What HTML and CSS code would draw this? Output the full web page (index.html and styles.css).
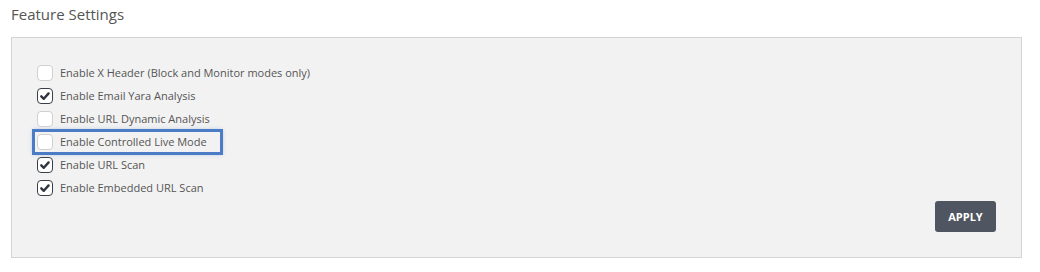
FILE: index.html
```html
<!DOCTYPE html>
<html>
<head>
<meta charset="utf-8">
<link rel="stylesheet" href="styles.css">
</head>
<body>
<div class="page">
  <h2 class="title">Feature Settings</h2>
  <div class="panel">
    <ul class="list">
      <li class="row"><span class="box"></span><span class="label">Enable X Header (Block and Monitor modes only)</span></li>
      <li class="row"><span class="box checked"><svg viewBox="0 0 16 16" width="16" height="16"><path d="M4.3 8.3 L6.8 10.8 L11.6 5.4" fill="none" stroke="#2f3640" stroke-width="2.4" stroke-linecap="round" stroke-linejoin="round"/></svg></span><span class="label">Enable Email Yara Analysis</span></li>
      <li class="row"><span class="box"></span><span class="label">Enable URL Dynamic Analysis</span></li>
      <li class="row highlight"><span class="box"></span><span class="label">Enable Controlled Live Mode</span></li>
      <li class="row"><span class="box checked"><svg viewBox="0 0 16 16" width="16" height="16"><path d="M4.3 8.3 L6.8 10.8 L11.6 5.4" fill="none" stroke="#2f3640" stroke-width="2.4" stroke-linecap="round" stroke-linejoin="round"/></svg></span><span class="label">Enable URL Scan</span></li>
      <li class="row"><span class="box checked"><svg viewBox="0 0 16 16" width="16" height="16"><path d="M4.3 8.3 L6.8 10.8 L11.6 5.4" fill="none" stroke="#2f3640" stroke-width="2.4" stroke-linecap="round" stroke-linejoin="round"/></svg></span><span class="label">Enable Embedded URL Scan</span></li>
    </ul>
    <div class="actions">
      <button class="apply">APPLY</button>
    </div>
  </div>
</div>
</body>
</html>
```
FILE: styles.css
```css
* { box-sizing: border-box; }
html, body { margin: 0; padding: 0; background: #fff; }
body { font-family: "Open Sans", "Liberation Sans", sans-serif; color: #555; }
.page { padding: 4px 0 0 11px; }
.title {
  margin: 0;
  font-size: 15px;
  font-weight: 400;
  color: #555;
  line-height: 20px;
  height: 33px;
}
.panel {
  background: #f2f2f2;
  border: 1px solid #d4d4d4;
  width: 1011px;
  height: 221px;
  padding: 23px 25px 0 25px;
  display: flex;
  flex-direction: column;
}
.list { list-style: none; margin: 0; padding: 0; }
.row {
  display: flex;
  align-items: center;
  height: 23px;
  gap: 7px;
  width: fit-content;
}
.row.highlight {
  margin-left: -4px;
  padding-left: 2px;
  padding-right: 12px;
  width: 189px;
  height: 24px;
  margin-bottom: -1px;
  outline: 3px solid #4d7cc6;
  outline-offset: -2px;
  box-shadow: 0 0 4px rgba(77,124,198,0.5);
}
.row.highlight .box { margin-left: 2px; }
.box {
  width: 16px;
  height: 16px;
  border: 1px solid #d0d0d0;
  border-radius: 4px;
  background: #fff;
  flex: none;
  display: block;
  position: relative;
}
.box.checked { border-color: #3a3f47; }
.box svg { position: absolute; left: -1px; top: -1px; }
.label { font-size: 11px; color: #555; line-height: 14px; }
.actions { display: flex; justify-content: flex-end; padding-right: 0; margin-top: 2px; }
.apply {
  background: #4f5661;
  color: #fff;
  border: none;
  border-radius: 3px;
  font-family: "Open Sans", "Liberation Sans", sans-serif;
  font-weight: 700;
  font-size: 11px;
  width: 61px;
  height: 31px;
  padding: 0;
}
```
